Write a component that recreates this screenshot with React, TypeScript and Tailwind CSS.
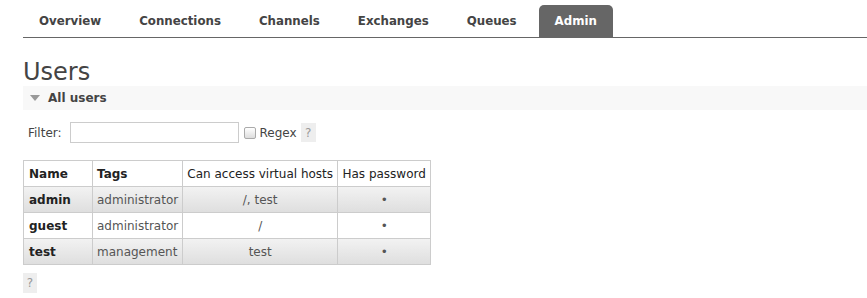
import React from 'react';

const tabs = ['Overview', 'Connections', 'Channels', 'Exchanges', 'Queues', 'Admin'];

const users = [
  { name: 'admin', tags: 'administrator', vhosts: '/, test' },
  { name: 'guest', tags: 'administrator', vhosts: '/' },
  { name: 'test', tags: 'management', vhosts: 'test' },
];

const App = () => {
  return (
    <div className="min-h-[298px] bg-white pl-[23px] text-[12px] text-[#444]" style={{ fontFamily: '"DejaVu Sans", Verdana, sans-serif' }}>
      {/* Tabs */}
      <div className="flex gap-[6px] border-b border-[#666] pt-[5px]">
        {tabs.map((t) => (
          <div
            key={t}
            className={
              t === 'Admin'
                ? 'flex h-[32px] items-center rounded-t-[5px] bg-[#666] px-[16px] pt-[2px] text-[11.8px] font-bold text-white'
                : 'flex h-[32px] items-center px-[16px] pt-[2px] text-[11.8px] font-bold text-[#444]'
            }
          >
            {t}
          </div>
        ))}
      </div>

      {/* Heading */}
      <h1 className="mt-[20px] text-[24px] leading-[28px] text-[#444]">Users</h1>

      {/* Section header */}
      <div className="flex h-[24px] items-center gap-[8px] bg-[#f8f8f8] pl-[7px] font-bold text-[#444]">
        <span className="h-0 w-0 border-x-[5px] border-t-[6px] border-x-transparent border-t-[#999]" />
        <span>All users</span>
      </div>

      {/* Filter */}
      <div className="mt-[12px] flex items-center pl-[5px]">
        <span>Filter:</span>
        <input className="ml-[8px] h-[21px] w-[169px] border border-[#ccc] bg-white" />
        <span className="ml-[5px] h-[12px] w-[12px] rounded-[2px] border border-[#aaa] bg-gradient-to-b from-[#fff] to-[#ddd]" />
        <span className="ml-[4px]">Regex</span>
        <span className="ml-[4px] flex h-[19px] w-[15px] items-center justify-center bg-[#eee] text-[#999]">?</span>
      </div>

      {/* Table */}
      <table className="mt-[17px] border-collapse">
        <thead>
          <tr className="h-[26px] bg-white">
            <th className="w-[69px] border border-[#ccc] px-[5px] text-left font-bold text-[#222]">Name</th>
            <th className="w-[90px] border border-[#ccc] px-[4px] text-left font-bold text-[#222]">Tags</th>
            <th className="w-[155px] border border-[#ccc] px-[4px] text-center font-normal text-[#222]">Can access virtual hosts</th>
            <th className="w-[93px] border border-[#ccc] px-[4px] text-center font-normal text-[#222]">Has password</th>
          </tr>
        </thead>
        <tbody>
          {users.map((u, i) => (
            <tr
              key={u.name}
              className={i % 2 === 0 ? 'h-[26px] bg-gradient-to-b from-[#f2f2f2] to-[#dedede]' : 'h-[26px] bg-white'}
            >
              <td className="border border-[#ccc] px-[5px] font-bold text-[#222]">{u.name}</td>
              <td className="border border-[#ccc] px-[4px] text-[#555]">{u.tags}</td>
              <td className="border border-[#ccc] px-[4px] text-center text-[#555]">{u.vhosts}</td>
              <td className="border border-[#ccc] px-[4px] text-center text-[#555]">•</td>
            </tr>
          ))}
        </tbody>
      </table>

      {/* Help */}
      <div className="mt-[8px] flex h-[20px] w-[14px] items-center justify-center bg-[#eee] text-[#999]">?</div>
    </div>
  );
};

export default App;
